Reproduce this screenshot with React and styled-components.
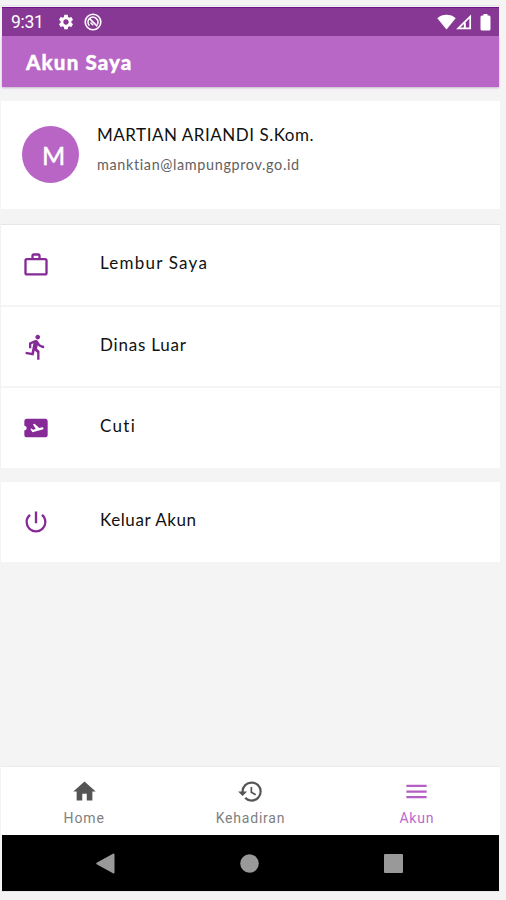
import React from "react";
import styled, { createGlobalStyle } from "styled-components";
import {
  MdAirplaneTicket,
  MdDirectionsRun,
  MdHistory,
  MdHome,
  MdMenu,
  MdPowerSettingsNew,
  MdSettings,
  MdWorkOutline,
} from "react-icons/md";

const GlobalStyle = createGlobalStyle`
  * {
    box-sizing: border-box;
  }
  body {
    margin: 0;
    background: #f4f4f5;
    font-family: Lato, "Liberation Sans", sans-serif;
  }
  svg {
    display: block;
    flex: none;
  }
`;

const Page = styled.div`
  height: 900px;
  padding: 5px 6px 8px 1px;
  background: #f4f4f5;
`;

const Screen = styled.div`
  display: flex;
  flex-direction: column;
  height: 887px;
  border: 1px solid #e6e4e8;
  border-left: 0;
  border-right: 0;
`;

const StatusBar = styled.div`
  display: flex;
  align-items: center;
  height: 29px;
  margin: 1px 1px 0;
  padding: 0 8px 0 9px;
  border-top: 1px solid #70148a;
  background: #873894;
  color: #fff;
`;

const Clock = styled.span`
  width: 46px;
  font: 400 17.5px/28px Roboto, sans-serif;
  letter-spacing: -0.3px;
`;

const StatusIcons = styled.div`
  display: flex;
  align-items: center;
  gap: ${(props) => props.$gap}px;
  margin-left: ${(props) => (props.$end ? "auto" : "0")};
`;

const AppBar = styled.header`
  display: flex;
  align-items: center;
  height: 51px;
  margin: 0 1px;
  padding: 0 24px;
  background: #b867c6;
  box-shadow: 0 1px 2px rgba(120, 60, 130, 0.35);
`;

const Title = styled.h1`
  margin: 0;
  color: #fff;
  font-size: 20.5px;
  font-weight: 900;
  letter-spacing: 1.15px;
  -webkit-text-stroke: 0.4px #fff;
`;

const Profile = styled.section`
  display: flex;
  height: 108px;
  margin-top: 14px;
  padding: 25px 21px;
  background: #fff;
`;

const Avatar = styled.div`
  display: flex;
  align-items: center;
  justify-content: center;
  width: 57px;
  height: 57px;
  padding: 1px 0 0 6px;
  border-radius: 50%;
  background: #b865c6;
  color: #fff;
  font-size: 25px;
  -webkit-text-stroke: 0.5px #fff;
`;

const Person = styled.div`
  margin-left: 18px;
`;

const Name = styled.div`
  color: #111;
  font-size: 17px;
  line-height: 18px;
  letter-spacing: 0.52px;
  white-space: nowrap;
`;

const Email = styled.div`
  margin-top: 13px;
  color: #626262;
  font-size: 14.4px;
  line-height: 16px;
  letter-spacing: 0.65px;
`;

const Menu = styled.nav`
  display: flex;
  flex-direction: column;
  gap: 2px;
  margin-top: ${(props) => props.$top}px;
  background: #f4f4f4;
  box-shadow: ${(props) => (props.$raised ? "0 -1px 1px #e6e6e6" : "none")};
`;

const MenuRow = styled.a`
  display: flex;
  align-items: center;
  height: ${(props) => props.$height || 80}px;
  padding-left: 21px;
  background: #fff;
  color: #852a96;
`;

const MenuIcon = styled.span`
  display: flex;
  justify-content: center;
  width: 28px;
`;

const MenuLabel = styled.span`
  margin: 0 0 4px 50px;
  color: #111;
  font-size: 17px;
  line-height: 20px;
  letter-spacing: ${(props) => props.$spacing}px;
`;

const TabBar = styled.nav`
  display: grid;
  grid-template-columns: repeat(3, 1fr);
  height: 68px;
  margin-top: auto;
  background: #fff;
  box-shadow: 0 -1px 1px #ececec;
`;

const Tab = styled.a`
  display: flex;
  flex-direction: column;
  align-items: center;
  padding-top: 11px;
  color: ${(props) => (props.$active ? "#b45fc4" : "#555")};
`;

const TabLabel = styled.span`
  margin-top: 4px;
  color: ${(props) => (props.$active ? "#bb6acb" : "#808080")};
  font: 400 14px/18px Roboto, sans-serif;
  letter-spacing: ${(props) => props.$spacing}px;
`;

const SystemBar = styled.div`
  display: flex;
  align-items: center;
  justify-content: space-between;
  height: 56px;
  margin: 0 1px;
  padding: 1px 96px 0 94px;
  background: #000;
`;

const menu = [
  { label: "Lembur Saya", icon: MdWorkOutline, size: 28, spacing: 1.22 },
  { label: "Dinas Luar", icon: MdDirectionsRun, size: 28, spacing: 0.8, height: 79 },
  { label: "Cuti", icon: MdAirplaneTicket, size: 28, spacing: 1.3 },
];

const tabs = [
  { label: "Home", icon: MdHome, spacing: 0.9 },
  { label: "Kehadiran", icon: MdHistory, spacing: 0.8 },
  { label: "Akun", icon: MdMenu, spacing: 0.8, active: true },
];

function NoDisturbIcon() {
  return (
    <svg width="18" height="18" viewBox="0 0 18 18" fill="none" stroke="#fff">
      <circle cx="9" cy="9" r="7.8" strokeWidth="1.6" />
      <path d="M5.400 12.600A5 5 0 0 1 5.600 5.400 5 5 0 0 1 13.200 11.700" strokeWidth="1.500" />
      <path d="M5.600 5.600l7.800 7.800M6.500 9.500l2.700 2.700" strokeWidth="1.500" />
    </svg>
  );
}

function WifiIcon() {
  return (
    <svg width="19" height="16" viewBox="0 0 19 16" fill="#fff">
      <path d="M.3 4.300C5.200-.3 13.800-.3 18.700 4.300L9.500 15.500z" />
    </svg>
  );
}

function SignalIcon() {
  return (
    <svg width="16" height="16" viewBox="0 0 16 16" fill="none" stroke="#fff">
      <path d="M2.200 14.300L14.200 2.600V14.300z" strokeWidth="1.700" />
      <path d="M8.800 14V8.500" strokeWidth="2" />
    </svg>
  );
}

function BatteryIcon() {
  return (
    <svg width="11" height="17" viewBox="0 0 11 17" fill="#fff">
      <path d="M3.500 0h4v1.500H9A1.500 1.500 0 0 1 10.500 3v12A1.500 1.500 0 0 1 9 16.500H2A1.500 1.500 0 0 1 .5 15V3A1.500 1.500 0 0 1 2 1.500h1.500z" />
    </svg>
  );
}

function MenuItem({ item }) {
  const Icon = item.icon;
  return (
    <MenuRow $height={item.height}>
      <MenuIcon>
        <Icon size={item.size} />
      </MenuIcon>
      <MenuLabel $spacing={item.spacing}>{item.label}</MenuLabel>
    </MenuRow>
  );
}

export default function App() {
  return (
    <Page>
      <GlobalStyle />
      <Screen>
        <StatusBar>
          <Clock>9:31</Clock>
          <StatusIcons $gap={9}>
            <MdSettings size={18} />
            <NoDisturbIcon />
          </StatusIcons>
          <StatusIcons $end $gap={8}>
            <StatusIcons $gap={0}>
              <WifiIcon />
              <SignalIcon />
            </StatusIcons>
            <BatteryIcon />
          </StatusIcons>
        </StatusBar>
        <AppBar>
          <Title>Akun Saya</Title>
        </AppBar>
        <Profile>
          <Avatar>M</Avatar>
          <Person>
            <Name>MARTIAN ARIANDI S.Kom.</Name>
            <Email>manktian@lampungprov.go.id</Email>
          </Person>
        </Profile>
        <Menu $top={16} $raised>
          {menu.map((item) => (
            <MenuItem key={item.label} item={item} />
          ))}
        </Menu>
        <Menu $top={14}>
          <MenuItem
            item={{
              label: "Keluar Akun",
              icon: MdPowerSettingsNew,
              size: 28,
              spacing: 0.58,
            }}
          />
        </Menu>
        <TabBar>
          {tabs.map(({ label, icon: Icon, spacing, active }) => (
            <Tab key={label} $active={active}>
              <Icon size={27} />
              <TabLabel $active={active} $spacing={spacing}>
                {label}
              </TabLabel>
            </Tab>
          ))}
        </TabBar>
        <SystemBar>
          <svg width="19" height="21" viewBox="0 0 19 21" fill="#999">
            <path d="M1 9.500L17 .8a1 1 0 0 1 1.500.8v17.800a1 1 0 0 1-1.500.8L1 11.500a1.200 1.200 0 0 1 0-2z" />
          </svg>
          <svg width="19" height="19" viewBox="0 0 19 19" fill="#999">
            <circle cx="9.500" cy="9.500" r="9.300" />
          </svg>
          <svg width="19" height="19" viewBox="0 0 19 19" fill="#999">
            <rect width="19" height="19" rx="1" />
          </svg>
        </SystemBar>
      </Screen>
    </Page>
  );
}
